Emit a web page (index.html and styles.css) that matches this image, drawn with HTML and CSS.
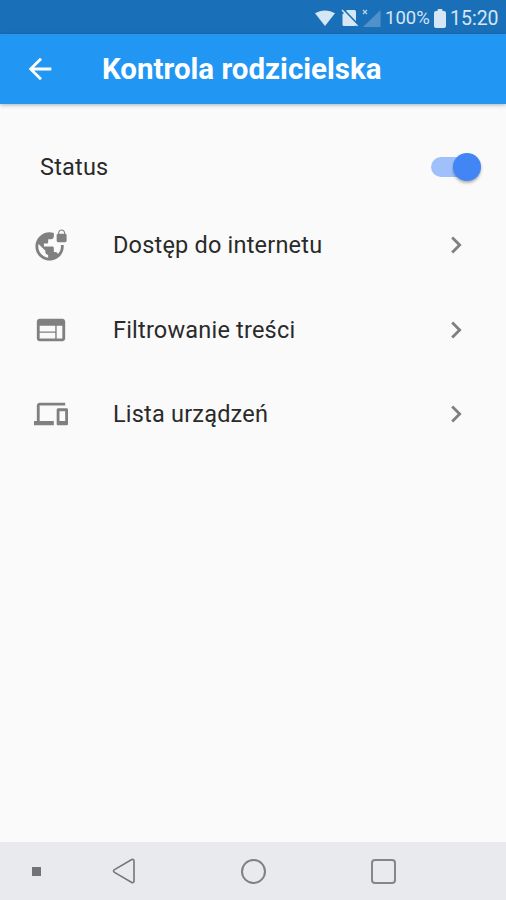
FILE: index.html
```
<!DOCTYPE html>
<html lang="pl">

<head>
  <meta charset="UTF-8">
  <meta name="viewport" content="width=device-width, initial-scale=1.0">
  <title>Kontrola rodzicielska</title>
  <link rel="stylesheet" href="styles.css">
</head>

<body>
  <div id="status-bar">
    <svg class="wifi" width="20" height="16" viewBox="0 0 20 16"><path d="M0 3.300C6-.6 14-.6 20 3.300L10 16z"/></svg>
    <svg class="no-sim" width="18" height="18" viewBox="0 0 18 18">
      <path d="M6 1h7.500a1.500 1.500 0 0 1 1.500 1.500V15.500a1.500 1.500 0 0 1-1.500 1.500H3a1.500 1.500 0 0 1-1.500-1.500V5.500z"/>
      <path class="gap" d="M2.500 .5l15 15.500"/>
      <path class="slash" d="M1 1l15.500 16"/>
    </svg>
    <svg class="signal" width="19" height="19" viewBox="0 0 19 19">
      <path class="bars" d="M18.500 1v17H1z"/>
      <path class="cross" d="M1 1l4 4M5 1L1 5"/>
    </svg>
    <span class="percent">100%</span>
    <svg class="battery" width="12" height="19" viewBox="0 0 12 19"><path d="M3.500 1q0-1 1-1h3q1 0 1 1v1H10q2 0 2 2v13q0 2-2 2H2q-2 0-2-2V4q0-2 2-2h1.500z"/></svg>
    <span class="clock">15:20</span>
  </div>

  <header id="app-bar">
    <svg class="back" width="34" height="34" viewBox="0 0 24 24"><path d="M20 11H7.830l5.590-5.590L12 4l-8 8 8 8 1.410-1.410L7.830 13H20v-2z"/></svg>
    <h1>Kontrola rodzicielska</h1>
  </header>

  <main id="settings">
    <div class="status-row">
      <span class="label status-label">Status</span>
      <div class="switch"><div class="thumb"></div></div>
    </div>

    <div class="row">
      <svg class="icon" viewBox="0 0 24 24"><path d="M22 4v-.5C22 2.120 20.880 1 19.500 1S17 2.120 17 3.500V4c-.55 0-1 .45-1 1v4c0 .55.45 1 1 1h5c.55 0 1-.45 1-1V5c0-.55-.45-1-1-1zm-.8 0h-3.400v-.5c0-.94.76-1.700 1.700-1.700s1.700.76 1.700 1.700V4zm-2.280 8c.04.33.08.66.08 1 0 2.080-.8 3.970-2.100 5.390-.26-.81-1-1.390-1.900-1.390h-1v-3c0-.55-.45-1-1-1H7v-2h2c.55 0 1-.45 1-1V8h2c1.100 0 2-.9 2-2V3.460c-.95-.3-1.950-.46-3-.46C5.480 3 1 7.480 1 13s4.480 10 10 10 10-4.480 10-10c0-.34-.02-.67-.05-1h-2.030zM10 20.930c-3.950-.49-7-3.850-7-7.930 0-.62.08-1.210.21-1.790L8 16v1c0 1.100.9 2 2 2v1.930z"/></svg>
      <span class="label">Dostęp do internetu</span>
      <svg class="chevron" viewBox="0 0 24 24"><path d="M10 6L8.590 7.410 13.170 12l-4.580 4.590L10 18l6-6z"/></svg>
    </div>
    <div class="row">
      <svg class="icon" viewBox="0 0 24 24"><path d="M20 4H4c-1.100 0-1.990.9-1.990 2L2 18c0 1.100.9 2 2 2h16c1.100 0 2-.9 2-2V6c0-1.100-.9-2-2-2zm-5 14H4v-4h11v4zm0-5H4V9h11v4zm5 5h-4V9h4v9z"/></svg>
      <span class="label">Filtrowanie treści</span>
      <svg class="chevron" viewBox="0 0 24 24"><path d="M10 6L8.590 7.410 13.170 12l-4.580 4.590L10 18l6-6z"/></svg>
    </div>
    <div class="row">
      <svg class="icon" viewBox="0 0 24 24"><path d="M4 6h18V4H4c-1.100 0-2 .9-2 2v11H0v3h14v-3H4V6zm19 2h-6c-.55 0-1 .45-1 1v10c0 .55.45 1 1 1h6c.55 0 1-.45 1-1V9c0-.55-.45-1-1-1zm-1 9h-4v-7h4v7z"/></svg>
      <span class="label">Lista urządzeń</span>
      <svg class="chevron" viewBox="0 0 24 24"><path d="M10 6L8.590 7.410 13.170 12l-4.580 4.590L10 18l6-6z"/></svg>
    </div>
  </main>

  <nav id="nav-bar">
    <div class="dot"></div>
    <svg class="nav-back" width="24" height="26" viewBox="0 0 24 26"><path d="M2.500 11.600L19.800 1.600Q22 .8 22 3v20q0 2.200-2.200 1.400L2.500 14.400Q.5 13 2.500 11.600z"/></svg>
    <div class="nav-home"></div>
    <div class="nav-recent"></div>
  </nav>
</body>

</html>
```
FILE: styles.css
```
* {
  box-sizing: border-box;
}

body {
  margin: 0;
  height: 900px;
  display: flex;
  flex-direction: column;
  overflow: hidden;
  background-color: #fafafa;
  font-family: Roboto, sans-serif;
}

svg {
  display: block;
  flex: none;
}

#status-bar {
  height: 34px;
  padding: 2px 8px 0 0;
  display: flex;
  align-items: center;
  justify-content: flex-end;
  background-color: #1a70b8;
  color: #d5e6f4;
  fill: #d5e6f4;
  font-size: 19.5px;
  white-space: nowrap;
}

.wifi {
  margin-right: 6px;
}

.no-sim {
  margin-right: 3px;
}

.slash {
  stroke: #d5e6f4;
  stroke-width: 1.5;
}

.gap {
  stroke: #1a70b8;
  stroke-width: 1.8;
}

.signal {
  margin-right: 4px;
}

.signal .bars {
  fill: #5091cb;
}

.signal .cross {
  stroke: #b5d1ea;
  stroke-width: 1.3;
}

.percent {
  width: 44px;
  font-size: 18.5px;
}

.battery {
  margin: 0 4px 0 5px;
}

.clock {
  width: 48px;
}

#app-bar {
  height: 70px;
  padding-left: 23px;
  display: flex;
  align-items: center;
  background-color: #2296f3;
  box-shadow: 0 1px 4px rgba(0, 0, 0, 0.3);
}

.back {
  fill: white;
}

#app-bar h1 {
  margin: 0 0 0 45px;
  color: white;
  font-size: 29.5px;
  font-weight: 700;
  line-height: 34px;
}

#settings {
  flex: 1;
  padding-top: 28px;
}

.status-row {
  height: 71px;
  padding: 0 25px 1px 40px;
  display: flex;
  align-items: center;
  justify-content: space-between;
}

.label {
  color: #2a2a2a;
  font-size: 23.5px;
  letter-spacing: 0.2px;
  white-space: nowrap;
}

.switch {
  width: 50px;
  height: 20px;
  display: flex;
  align-items: center;
  justify-content: flex-end;
  border-radius: 10px;
  background: linear-gradient(to right, #a0c0fc 40px, transparent 40px);
}

.thumb {
  width: 28px;
  height: 28px;
  border-radius: 50%;
  background-color: #4285f4;
  box-shadow: 0 2px 3px rgba(0, 0, 0, 0.3);
}

.row {
  height: 84.4px;
  padding: 0 33px 0 34px;
  display: flex;
  align-items: center;
}

.icon,
.chevron {
  width: 34px;
  height: 34px;
  fill: #808080;
}

.row .label {
  flex: 1;
  margin-left: 45px;
}

#nav-bar {
  height: 58px;
  padding-left: 32px;
  display: flex;
  align-items: center;
  background-color: #e8eaed;
}

.dot {
  width: 9px;
  height: 9px;
  background-color: #737375;
}

.nav-back {
  margin-left: 71px;
  fill: none;
  stroke: #757678;
  stroke-width: 1.6;
}

.nav-home {
  width: 25px;
  height: 25px;
  margin-left: 105px;
  border: 2px solid #808183;
  border-radius: 50%;
}

.nav-recent {
  width: 25px;
  height: 25px;
  margin-left: 105px;
  border: 2px solid #858688;
  border-radius: 4px;
}
```
